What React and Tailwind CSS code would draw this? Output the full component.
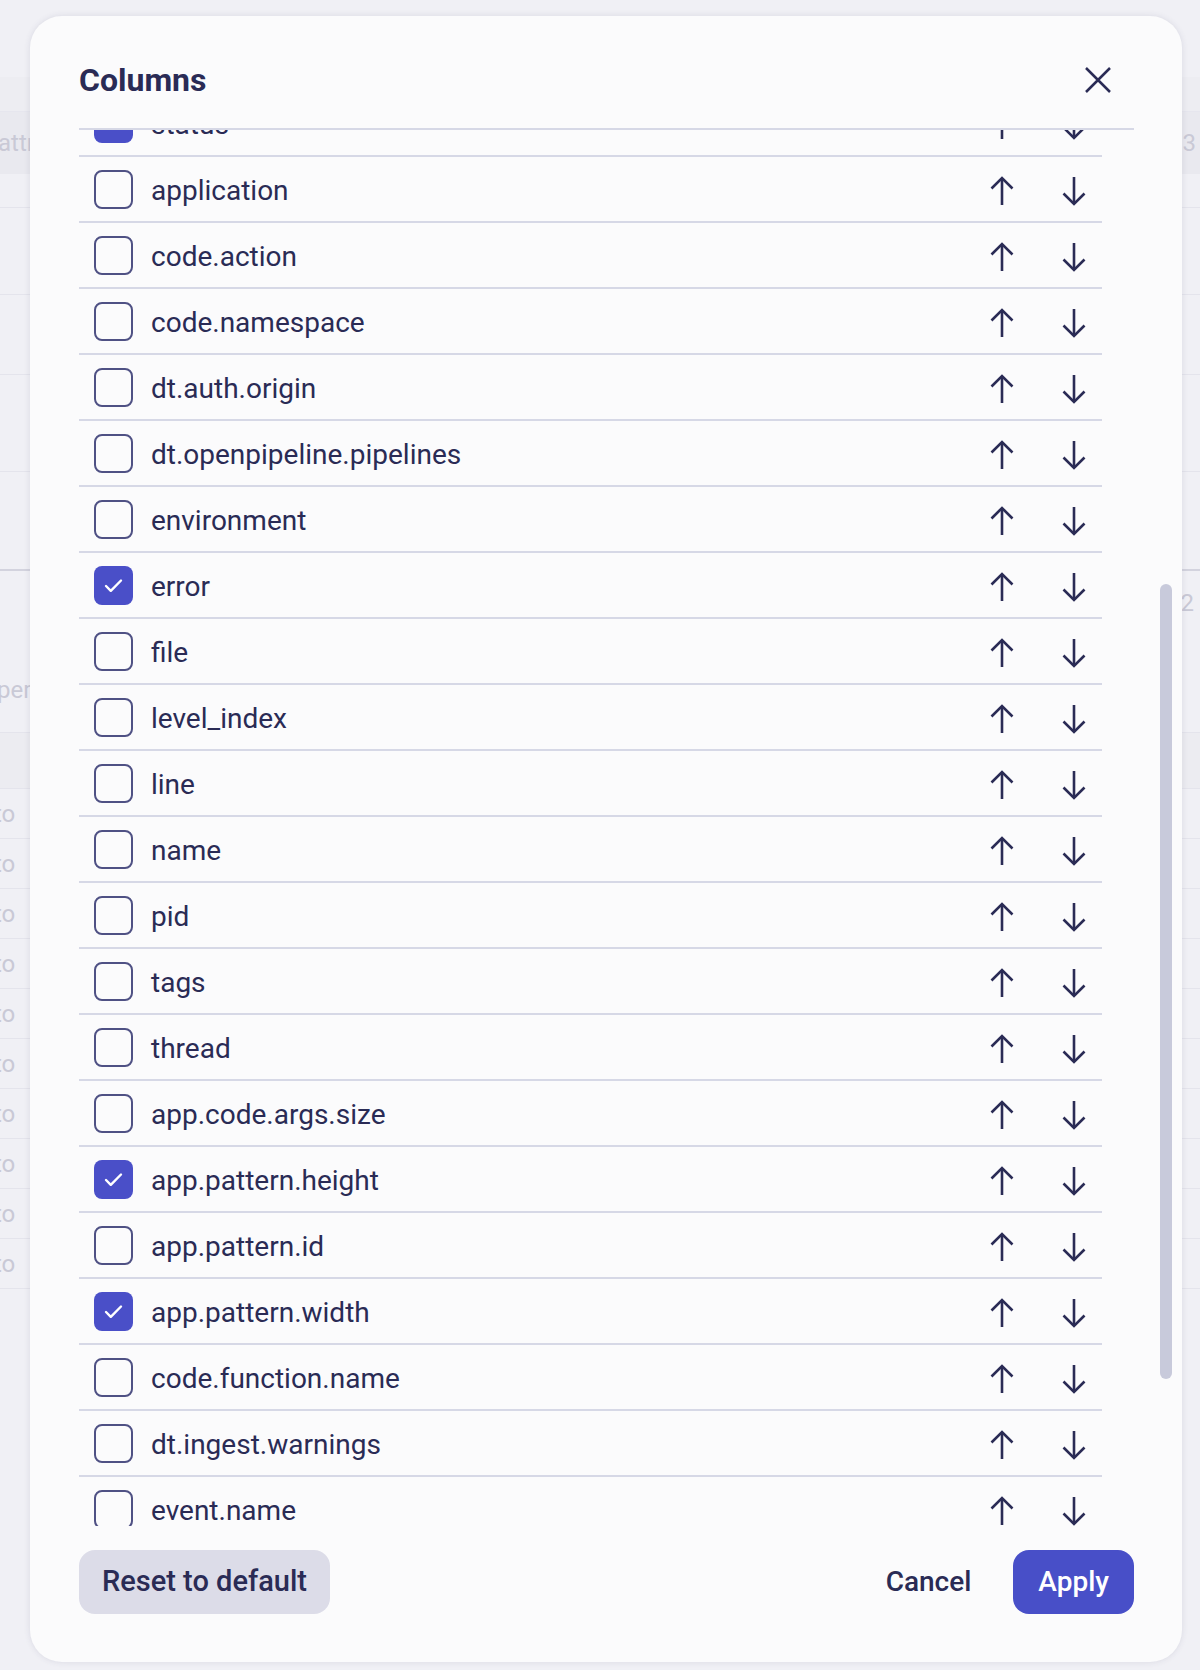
import React from 'react';

const columns = [
    ['status', true],
    ['application', false],
    ['code.action', false],
    ['code.namespace', false],
    ['dt.auth.origin', false],
    ['dt.openpipeline.pipelines', false],
    ['environment', false],
    ['error', true],
    ['file', false],
    ['level_index', false],
    ['line', false],
    ['name', false],
    ['pid', false],
    ['tags', false],
    ['thread', false],
    ['app.code.args.size', false],
    ['app.pattern.height', true],
    ['app.pattern.id', false],
    ['app.pattern.width', true],
    ['code.function.name', false],
    ['dt.ingest.warnings', false],
    ['event.name', false],
];

function ArrowUp() {
    return (
        <svg width="24" height="30" viewBox="0 0 24 30" fill="none" stroke="#2a2b55" strokeWidth="2.6">
            <path d="M12 2v27" />
            <path d="M1.5 12.5 12 2l10.5 10.5" />
        </svg>
    );
}

function ArrowDown() {
    return (
        <svg width="24" height="30" viewBox="0 0 24 30" fill="none" stroke="#2a2b55" strokeWidth="2.6">
            <path d="M12 1v27" />
            <path d="M1.5 17.5 12 28l10.5-10.5" />
        </svg>
    );
}

function Checkbox({ checked }) {
    if (checked) {
        return (
            <div className="flex h-[39px] w-[39px] shrink-0 items-center justify-center rounded-[8px] bg-[#4a4fc8]">
                <svg width="19" height="15" viewBox="0 0 19 15" fill="none" stroke="#ffffff" strokeWidth="2.4" strokeLinecap="round" strokeLinejoin="round">
                    <path d="M2 8 6.8 12.8 17 2.5" />
                </svg>
            </div>
        );
    }
    return <div className="h-[39px] w-[39px] shrink-0 rounded-[8px] border-2 border-[#4f5184]" />;
}

function ColumnRow({ name, checked }) {
    return (
        <div className="flex h-[66px] items-center border-b-2 border-[#d6d8e6] pl-[15px] pr-[16px]">
            <Checkbox checked={checked} />
            <span className="ml-[18px] flex-1 pt-[4px] text-[28px] leading-none text-[#2a2b55]">{name}</span>
            <div className="flex items-center gap-[48px] pt-[3px]">
                <ArrowUp />
                <ArrowDown />
            </div>
        </div>
    );
}

// faint page behind the dialog
function BackgroundPage() {
    const toRows = [0, 1, 2, 3, 4, 5, 6, 7, 8, 9];
    return (
        <div className="flex flex-col text-[24px] text-[#c9c9d6]">
            <div className="h-[77px]" />
            <div className="h-[35px] border-b border-[#e6e6ee] bg-[#ededf2]" />
            <div className="flex h-[62px] items-center justify-between bg-[#e9e9ef] pr-[4px]">
                <span className="-ml-[2px]">attributes</span>
                <span>3</span>
            </div>
            <div className="h-[34px] border-b border-[#e4e4ec]" />
            <div className="h-[87px] border-b border-[#e4e4ec]" />
            <div className="h-[80px] border-b border-[#e4e4ec]" />
            <div className="h-[97px] border-b border-[#e4e4ec]" />
            <div className="h-[99px] border-b-2 border-[#d3d3de]" />
            <div className="flex h-[50px] items-end justify-end pr-[6px]">
                <span>2</span>
            </div>
            <div className="flex h-[112px] items-center border-b border-[#e4e4ec] pt-[26px]">
                <span className="-ml-[3px]">per</span>
            </div>
            <div className="h-[56px] border-b border-[#e4e4ec] bg-[#ececf1]" />
            {toRows.map((i) => (
                <div key={i} className="flex h-[50px] items-center border-b border-[#e4e4ec]">
                    <span className="-ml-[6px]">to</span>
                </div>
            ))}
        </div>
    );
}

export default function App() {
    return (
        <div className="relative h-[1670px] w-[1200px] overflow-hidden bg-[#f0f0f5] font-['Roboto',sans-serif]">
            <BackgroundPage />

            <div className="absolute left-[30px] top-[16px] flex h-[1646px] w-[1152px] flex-col rounded-[32px] bg-[#fbfbfc] pl-[49px] pr-[48px] shadow-[0_0_6px_rgba(60,60,100,0.12)]">
                <div className="flex items-center justify-between border-b-2 border-[#d6d8e6] pb-[32px] pt-[48px]">
                    <h2 className="text-[32px] font-bold leading-[32px] text-[#2a2b55]">Columns</h2>
                    <button className="mr-[22px]">
                        <svg width="28" height="28" viewBox="0 0 28 28" fill="none" stroke="#2a2b55" strokeWidth="2.5">
                            <path d="M2 2l24 24M26 2 2 26" />
                        </svg>
                    </button>
                </div>

                <div className="h-[1396px] overflow-hidden">
                    <div className="-mt-[39px] w-[1023px]">
                        {columns.map(([name, checked]) => (
                            <ColumnRow key={name} name={name} checked={checked} />
                        ))}
                    </div>
                </div>

                <div className="flex items-center justify-between pt-[24px]">
                    <button className="h-[64px] rounded-[16px] bg-[#dcdce8] px-[23px] text-[29px] font-medium text-[#2a2b55]">
                        Reset to default
                    </button>
                    <div className="flex items-center">
                        <button className="text-[28px] font-medium text-[#2a2b55]">Cancel</button>
                        <button className="ml-[42px] h-[64px] rounded-[16px] bg-[#484fc8] px-[25px] text-[28px] font-medium text-white">
                            Apply
                        </button>
                    </div>
                </div>

                {/* scrollbar thumb */}
                <div className="absolute left-[1130px] top-[568px] h-[795px] w-[12px] rounded-full bg-[#c8cadb]" />
            </div>
        </div>
    );
}
